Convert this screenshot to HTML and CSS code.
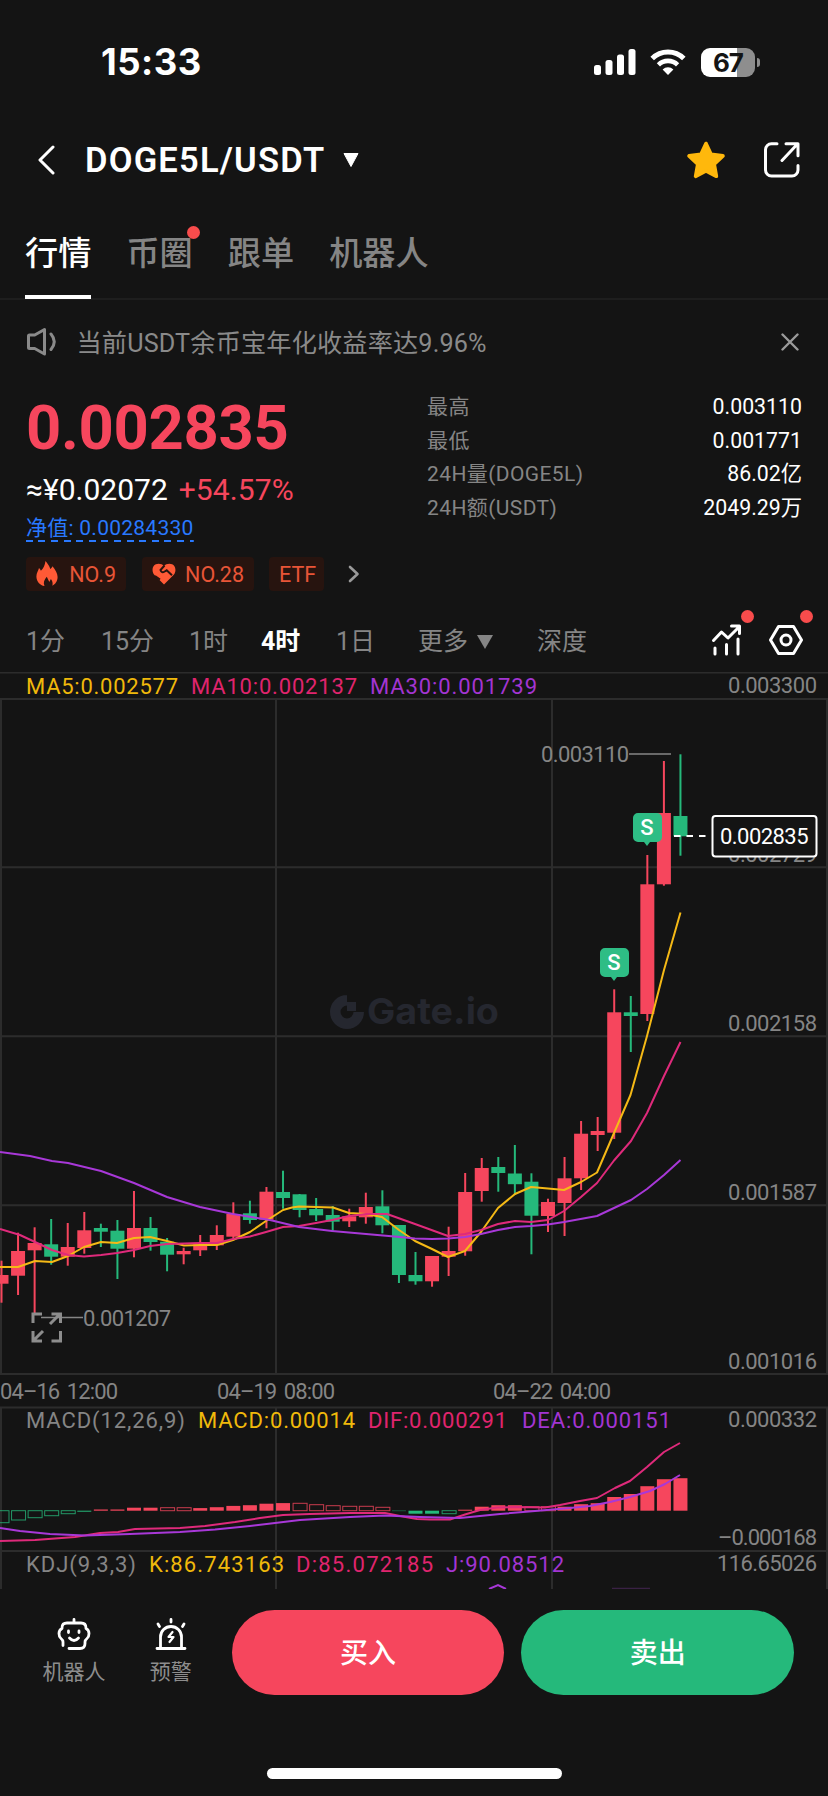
FILE: index.html
```html
<!DOCTYPE html>
<html lang="zh-Hans">
<head>
  <meta charset="UTF-8" />
  <meta name="viewport" content="width=device-width, initial-scale=1.0"/>
  <title>DOGE5L/USDT</title>
  <link rel="stylesheet" href="styles.css">
</head>
<body>

<div class="status-bar">
  <span class="time">15:33</span>
  <svg class="signal" width="42" height="26" viewBox="0 0 42 26" fill="#fff">
    <rect x="0" y="16" width="7" height="10" rx="2.5"/>
    <rect x="11.5" y="11" width="7" height="15" rx="2.5"/>
    <rect x="23" y="5.5" width="7" height="20.5" rx="2.5"/>
    <rect x="34.5" y="0" width="7" height="26" rx="2.5"/>
  </svg>
  <svg class="wifi" width="36" height="26" viewBox="0 0 36 26">
    <path d="M2.2 9.6a22.4 22.4 0 0 1 31.6 0" fill="none" stroke="#fff" stroke-width="5"/>
    <path d="M8.4 15.8a13.8 13.8 0 0 1 19.2 0" fill="none" stroke="#fff" stroke-width="4.6"/>
    <path d="M18 26l-5.4-5.6a7.8 7.8 0 0 1 10.8 0z" fill="#fff"/>
  </svg>
  <div class="battery"><span>67</span></div>
</div>

<header class="header">
  <svg class="back" width="18" height="30" viewBox="0 0 18 30"><path d="M15 2L2 15l13 13" fill="none" stroke="#fff" stroke-width="3" stroke-linecap="round" stroke-linejoin="round"/></svg>
  <h1>DOGE5L/USDT</h1>
  <svg class="caret" width="16" height="14" viewBox="0 0 16 14"><path d="M1 .5h14L8 13.5z" fill="#fff" stroke="#fff" stroke-linejoin="round"/></svg>
  <svg class="star" width="40" height="38" viewBox="0 0 40 38"><path d="M20 2.5l5 10.8 12 1.6-8.8 8.2 2.2 12.2L20 30 9.6 35.3l2.2-12.2L3 14.9l12-1.6z" fill="#ffb80c" stroke="#ffb80c" stroke-width="3.6" stroke-linejoin="round"/></svg>
  <svg class="share" width="36" height="36" viewBox="0 0 36 36" fill="none" stroke="#fff" stroke-width="3" stroke-linecap="round" stroke-linejoin="round">
    <path d="M13 1.7H7.5a6 6 0 0 0-6 6V28a6 6 0 0 0 6 6H28a6 6 0 0 0 6-6v-4.5"/>
    <path d="M22 1.7h12v12M33.5 2L18 18.5"/>
  </svg>
</header>

<nav class="tabs">
  <a class="tab active">行情</a>
  <a class="tab dot">币圈</a>
  <a class="tab">跟单</a>
  <a class="tab">机器人</a>
</nav>

<div class="notice">
  <svg width="32" height="30" viewBox="0 0 32 30" fill="none" stroke="#8a8a8a" stroke-width="3" stroke-linejoin="round">
    <path d="M2.5 9q0-1 1-1h5.2L18.500 2.500V27L8.700 21.500H3.500q-1 0-1-1z"/>
    <path d="M25 7q6.5 7.800 0 15.500" stroke-linecap="round"/>
  </svg>
  <span>当前USDT余币宝年化收益率达9.96%</span>
  <svg class="close" width="18" height="18" viewBox="0 0 18 18"><path d="M1.5 1.5l15 15M16.5 1.5l-15 15" stroke="#9a9a9a" stroke-width="2.4" stroke-linecap="round"/></svg>
</div>

<section class="summary">
  <div class="quote">
    <div class="price">0.002835</div>
    <div class="fiat"><span>≈¥0.02072</span><span class="change">+54.57%</span></div>
    <div class="nav-row"><span class="nav-value">净值: 0.00284330</span></div>
    <div class="badges">
      <span class="badge b1">
        <svg width="22" height="26" viewBox="0 0 22 26" fill="#ff5a36"><path d="M9.5 0c1.8 2.5 4 4.8 4.8 8 1-.6 1.800-1.600 2.200-2.800C19.500 9 21.600 12.500 21.600 16c0 4-2.300 7.300-5.200 8.700.6-2.600 0-4.700-1.500-6.700l-1.600 3-2.500-5.200c-2.600 3-3.800 6-2.300 9.200C4 24.500.4 20.500.4 15.500c0-3.500 1.900-5.500 2.600-8.500.8.9 1.500 1.700 1.900 2.700C7.700 7.300 8.800 4.200 9.500 0z"/></svg>
        NO.9
      </span>
      <span class="badge b2">
        <svg width="24" height="22" viewBox="0 0 24 22"><path d="M12 21.5L2 11.5C-1 7 .8.8 6.5.8c2.3 0 4.2.8 5.5 2.2C13.300 1.600 15.200.8 17.500.8 23.200.8 25 7 22 11.500z" fill="#ff5a36"/><path d="M12.5 2.500L8.500 7q1 3.500 4.200 1.500l2-1.200 5.300 5M3 13l5 3.500" fill="none" stroke="#27140f" stroke-width="2"/></svg>
        NO.28
      </span>
      <span class="badge b3">ETF</span>
      <svg class="more" width="12" height="18" viewBox="0 0 12 18"><path d="M2 2l7.500 7L2 16" fill="none" stroke="#9a9a9a" stroke-width="2.600" stroke-linecap="round" stroke-linejoin="round"/></svg>
    </div>
  </div>
  <dl class="stats">
    <dt>最高</dt><dd>0.003110</dd>
    <dt>最低</dt><dd>0.001771</dd>
    <dt>24H量(DOGE5L)</dt><dd>86.02亿</dd>
    <dt>24H额(USDT)</dt><dd>2049.29万</dd>
  </dl>
</section>

<div class="periods">
  <span class="p1">1分</span>
  <span class="p2">15分</span>
  <span class="p3">1时</span>
  <span class="p4 active">4时</span>
  <span class="p5">1日</span>
  <span class="p6">更多<i></i></span>
  <span class="p7">深度</span>
  <div class="tool dot t1">
    <svg width="32" height="32" viewBox="0 0 32 32" fill="none" stroke="#fff" stroke-width="3" stroke-linecap="round" stroke-linejoin="round"><path d="M2.5 16.5L10.5 8l6.5 6L28 3M20.5 2h8v7.5"/><path d="M4 24v6M15.5 20.5V30M27 15v15"/></svg>
  </div>
  <div class="tool dot t2">
    <svg width="34" height="30" viewBox="0 0 34 30" fill="none" stroke="#fff" stroke-width="3" stroke-linejoin="round"><path d="M9.5 1.500h15L32.500 15l-8 13.500h-15L1.500 15z"/><circle cx="17" cy="15" r="5"/></svg>
  </div>
</div>

<svg id="chart" width="828" height="917" viewBox="0 672 828 917">
  <g class="grid">
    <path d="M0 672.5H828" stroke-width="1.5"/>
    <path d="M0 699H828M0 867.3H828M0 1036.3H828M0 1205.3H828M0 1374H828M0 1407.5H828M0 1551H828"/>
    <path d="M1 699V1374M276 699V1374M552 699V1374M827 699V1374M1 1407V1589M276 1407V1589M552 1407V1589M827 1407V1589"/>
  </g>

  <g class="watermark">
    <path d="M347 994.500v11a6.500 6.500 0 1 0 6.500 6.500h10.500a17 17 0 1 1-17-17z"/>
    <rect x="347" y="1002" width="9" height="9"/>
    <text x="367" y="1024" textLength="132" lengthAdjust="spacingAndGlyphs">Gate.io</text>
  </g>

  <g id="candles"></g>
  <g id="macd"></g>
  <g id="lines"></g>

  <path d="M489 1589l9-4 8 4" fill="none" stroke="#a838d8" stroke-width="2"/>
  <path d="M612 1588.5h38" stroke="#3a2144" stroke-width="1.5"/>

  <g class="labels">
    <text class="ma1" x="26" y="694" textLength="152">MA5:0.002577</text>
    <text class="ma2" x="191" y="694" textLength="166">MA10:0.002137</text>
    <text class="ma3" x="370" y="694" textLength="167">MA30:0.001739</text>
    <text x="728" y="693" textLength="89">0.003300</text>
    <text x="728" y="862" textLength="89">0.002729</text>
    <text x="728" y="1031" textLength="89">0.002158</text>
    <text x="728" y="1200" textLength="89">0.001587</text>
    <text x="728" y="1369" textLength="89">0.001016</text>
    <text class="date" x="0" y="1398.5" textLength="118">04–16 12:00</text>
    <text class="date" x="217" y="1398.5" textLength="118">04–19 08:00</text>
    <text class="date" x="493" y="1398.5" textLength="118">04–22 04:00</text>
    <text x="26" y="1428" textLength="159">MACD(12,26,9)</text>
    <text class="ma1" x="198" y="1428" textLength="157">MACD:0.00014</text>
    <text class="ma2" x="368" y="1428" textLength="139">DIF:0.000291</text>
    <text class="ma3" x="522" y="1428" textLength="149">DEA:0.000151</text>
    <text x="728" y="1427" textLength="89">0.000332</text>
    <text x="718" y="1545" textLength="99">–0.000168</text>
    <text x="26" y="1571.5" textLength="110">KDJ(9,3,3)</text>
    <text class="ma1" x="149" y="1571.5" textLength="135">K:86.743163</text>
    <text class="ma2" x="296" y="1571.5" textLength="137">D:85.072185</text>
    <text class="ma3" x="446" y="1571.5" textLength="118">J:90.08512</text>
    <text x="717" y="1571" textLength="100">116.65026</text>
    <text x="541" y="762" textLength="88">0.003110</text>
    <text x="83" y="1325.5" textLength="88">0.001207</text>
  </g>
  <path d="M629 754H671M41 1317.5H83" stroke="#858585" stroke-width="1.5"/>

  <!-- fullscreen handle -->
  <path d="M33 1323v-9h9M51.5 1314h9v9M50 1324l9.500-9.500M60.500 1331v10h-9M33 1331v10h9M34 1340l9-9" fill="none" stroke="#8d8d8d" stroke-width="3"/>

  <!-- sell markers -->
  <g class="marker"><path d="M638 813h19a5 5 0 0 1 5 5v19a5 5 0 0 1-5 5h-7l-3 4-3-4h-6a5 5 0 0 1-5-5v-19a5 5 0 0 1 5-5z"/><text x="647" y="835">S</text></g>
  <g class="marker"><path d="M605 948h19a5 5 0 0 1 5 5v19a5 5 0 0 1-5 5h-7l-3 4-3-4h-6a5 5 0 0 1-5-5v-19a5 5 0 0 1 5-5z"/><text x="614" y="970">S</text></g>

  <path d="M674 836H706" stroke="#fff" stroke-width="2" stroke-dasharray="6.5 6"/>
  <rect x="712.5" y="816" width="104" height="40.5" rx="3" fill="#141414" stroke="#fff" stroke-width="2"/>
  <text class="last" x="720" y="843.5" textLength="88.5">0.002835</text>
</svg>

<footer class="bottom-bar">
  <a class="item robot">
    <svg width="34" height="32" viewBox="0 0 34 32" fill="none" stroke="#fff" stroke-width="2.8" stroke-linecap="round" stroke-linejoin="round">
      <path d="M17 1.5V5M6 27.500V24q0-2-2-3.500Q2 19 2 15.500t3-5V10q0-5 5-5h14q5 0 5 5v.5q3 1.500 3 5t-2 5q-2 1.500-2 3.500v1.500q0 5-5 5H12"/>
      <path d="M11.5 13v1.5M22 13v1.5M12.5 20q4.5 5 9 0"/>
    </svg>
    <span>机器人</span>
  </a>
  <a class="item alert">
    <svg width="32" height="32" viewBox="0 0 32 32" fill="none" stroke="#fff" stroke-width="2.8" stroke-linecap="round" stroke-linejoin="round">
      <path d="M16 1.5V4M3 6l1.5 2.5M29 6l-1.5 2.5M2 30.5h28M5.5 30V19a10.5 10.5 0 0 1 21 0v11"/>
      <path d="M17.500 14l-4 5h5l-4 5" stroke-width="2.200"/>
    </svg>
    <span>预警</span>
  </a>
  <button class="buy">买入</button>
  <button class="sell">卖出</button>
</footer>
<div class="home-indicator"></div>

<script src="chart.js"></script>
</body>
</html>
```
FILE: styles.css
```css
* {
  box-sizing: border-box;
}

body {
  margin: 0;
  width: 828px;
  height: 1796px;
  overflow: hidden;
  background: #141414;
  color: #fff;
  font-family: Roboto, "Noto Sans CJK SC", sans-serif;
}

svg {
  display: block;
  flex: none;
}

.status-bar {
  height: 124px;
  padding: 0 73px 0 101px;
  display: flex;
  align-items: center;
}

.time {
  font-family: Inter, sans-serif;
  font-weight: 700;
  font-size: 36.5px;
  letter-spacing: 0.5px;
  margin-right: auto;
}

.wifi {
  margin: 0 15px 0 14px;
}

.battery {
  position: relative;
  width: 54px;
  height: 29px;
  border-radius: 9px;
  background: linear-gradient(90deg, #fff 66%, #8e8e8e 66%);
  color: #141414;
  font: 700 26px/29px Inter, sans-serif;
  letter-spacing: -1px;
  text-align: center;
}

.battery::after {
  content: "";
  position: absolute;
  right: -5px;
  top: 10px;
  width: 3px;
  height: 9px;
  border-radius: 0 3px 3px 0;
  background: #8e8e8e;
}

.header {
  height: 72px;
  padding: 0 28px 0 38px;
  display: flex;
  align-items: center;
}

.header h1 {
  margin: 0 18px 0 29px;
  font-size: 34.5px;
  font-weight: 600;
  letter-spacing: 1.2px;
}

.star {
  margin: 0 38px 0 auto;
}

.tabs {
  height: 104px;
  padding: 0 25px;
  display: flex;
  gap: 35px;
  border-bottom: 2px solid #1e1e1e;
}

.tab {
  position: relative;
  height: 103px;
  font-size: 33.2px;
  font-weight: 500;
  line-height: 115px;
  color: #858585;
}

.tab.active {
  color: #fff;
  border-bottom: 4px solid #fff;
}

.dot::after {
  content: "";
  position: absolute;
  width: 13px;
  height: 13px;
  border-radius: 50%;
  background: #f84c4c;
}

.tab.dot::after {
  top: 30px;
  right: -7px;
}

.notice {
  height: 82px;
  padding: 1px 29px 0 26px;
  display: flex;
  align-items: center;
  font-size: 25.2px;
  letter-spacing: 0.15px;
  color: #8a8a8a;
}

.notice span {
  margin: -2px auto 0 18.5px;
}

.summary {
  height: 226px;
  padding: 2px 26px 0;
  display: flex;
  justify-content: space-between;
}

.price {
  height: 82px;
  margin-top: 3px;
  font-size: 61.5px;
  font-weight: 700;
  line-height: 82px;
  letter-spacing: -0.3px;
  color: #f6465d;
}

.fiat {
  height: 42px;
  font-size: 30px;
  line-height: 42px;
}

.change {
  margin-left: 11px;
  letter-spacing: 0.1px;
  color: #f6465d;
}

.nav-row {
  height: 36px;
  font-size: 21px;
  line-height: 34px;
  color: #2979ff;
}

.nav-value {
  display: inline-block;
  height: 31px;
  letter-spacing: 0.25px;
  background: repeating-linear-gradient(90deg, #2979ff 0 7px, transparent 7px 12.6px) bottom / 100% 2px no-repeat;
}

.badges {
  display: flex;
  align-items: center;
  margin-top: 10px;
}

.badge {
  height: 34px;
  padding: 0 10px;
  display: flex;
  align-items: center;
  justify-content: space-between;
  border-radius: 4px;
  background: #27140f;
  color: #e85537;
  font-size: 21.5px;
}

.b1 {
  width: 100px;
}

.b2 {
  width: 112px;
  margin: 0 15px 0 16px;
}

.b3 {
  width: 55px;
}

.more {
  margin-left: 24px;
}

.stats {
  width: 375px;
  height: 136px;
  margin: 6px 0 0;
  display: grid;
  grid-template-columns: auto auto;
  grid-auto-rows: 33.7px;
  line-height: 34px;
  font-size: 21px;
}

.stats dt {
  letter-spacing: 0.4px;
  color: #858585;
}

.stats dd {
  margin: 0;
  text-align: right;
  font-size: 21.3px;
}

.periods {
  height: 64px;
  padding-left: 26px;
  display: grid;
  grid-template-columns: 75px 88px 72px 75px 82px 119px 174px 58px 59px;
  align-items: center;
  font-size: 25px;
  color: #858585;
}

.periods span {
  margin-top: -3px;
}

.periods .active {
  color: #fff;
  font-weight: 700;
}

.periods i {
  display: inline-block;
  margin-left: 9px;
  border: solid transparent;
  border-width: 14px 8px 0;
  border-top-color: #858585;
  vertical-align: 1px;
}

.tool {
  position: relative;
}

.tool.dot::after {
  top: -14px;
  left: 30px;
}

.t2.dot::after {
  top: -15px;
  left: 31px;
}

#chart text {
  font-size: 22px;
  fill: #858585;
}

#chart .date {
  word-spacing: 3px;
}

.grid path {
  stroke: #2c2c2c;
  stroke-width: 2;
}

#chart .watermark text {
  font: 700 36px Inter, sans-serif;
  fill: #25272f;
}

.watermark path,
.watermark rect {
  fill: #25272f;
}

#chart .ma1 {
  fill: #f0b90b;
}

#chart .ma2 {
  fill: #e0246e;
}

#chart .ma3 {
  fill: #a335d2;
}

.marker path {
  fill: #2ebd85;
}

#chart .marker text {
  fill: #fff;
  font-weight: 500;
  text-anchor: middle;
}

#chart .last {
  fill: #fff;
}

#lines polyline {
  fill: none;
  stroke-width: 2;
  stroke-linejoin: round;
}

.bottom-bar {
  height: 128px;
  padding: 0 34px 2px 33px;
  display: flex;
  align-items: center;
}

.item {
  display: flex;
  flex-direction: column;
  align-items: center;
  gap: 7px;
  padding-top: 1px;
  font-size: 21px;
  line-height: 30px;
  color: #8d8d8d;
}

.robot {
  width: 82px;
}

.alert {
  width: 112px;
}

.bottom-bar button {
  width: 273px;
  height: 85px;
  padding: 0 0 3px;
  border: 0;
  border-radius: 43px;
  color: #fff;
  font: 500 28px "Noto Sans CJK SC", sans-serif;
}

.buy {
  margin: 0 17px 0 5px;
  background: #f6465d;
}

.sell {
  background: #25b97b;
}

.home-indicator {
  width: 295px;
  height: 11px;
  margin: 51px auto 0;
  border-radius: 6px;
  background: #fff;
}
```
FILE: chart.js
```js
const NS = "http://www.w3.org/2000/svg";
const RED = "#f6465d";
const GREEN = "#25b97b";
const STEP = 16.56;
const ZERO = 1510.7;

// [color, high, bodyTop, bodyBottom, low]
const candles = [
  ["r", 1260.7, 1275, 1283.7, 1302.7],
  ["r", 1232.7, 1251, 1275.7, 1295],
  ["r", 1227.3, 1243, 1250.3, 1313],
  ["g", 1219, 1244.3, 1256.7, 1264.7],
  ["r", 1223, 1247, 1256.7, 1265.7],
  ["r", 1212, 1230.3, 1248, 1253.7],
  ["g", 1223.7, 1228, 1231.7, 1247],
  ["g", 1220, 1230.7, 1248.7, 1279],
  ["r", 1191, 1228, 1248.7, 1257.3],
  ["g", 1217, 1228, 1242, 1250.7],
  ["g", 1238, 1241.7, 1254.7, 1271.3],
  ["r", 1247.7, 1251, 1254.3, 1264.3],
  ["r", 1235, 1244.3, 1250.3, 1256],
  ["r", 1225.3, 1235, 1245.3, 1250],
  ["r", 1202.3, 1214, 1236.7, 1238],
  ["g", 1200.7, 1213.3, 1220, 1223.7],
  ["r", 1187, 1191.7, 1219.7, 1228.3],
  ["g", 1170.7, 1192, 1198, 1208.7],
  ["g", 1194, 1194.3, 1210, 1217.3],
  ["g", 1198, 1209, 1215.3, 1221],
  ["g", 1206, 1215, 1221.7, 1231.7],
  ["r", 1208.7, 1216.3, 1221.3, 1227],
  ["r", 1192.7, 1207, 1217.3, 1223.7],
  ["g", 1190.3, 1206.3, 1225.3, 1233.3],
  ["g", 1225, 1225, 1275, 1283],
  ["g", 1252, 1275, 1281.3, 1284.7],
  ["r", 1256, 1256, 1281.3, 1286.7],
  ["r", 1226.7, 1251, 1256.7, 1276],
  ["r", 1173, 1192, 1251.3, 1255.7],
  ["r", 1158, 1168, 1191, 1201.7],
  ["g", 1157, 1167, 1173, 1191.7],
  ["g", 1145, 1173.5, 1184.2, 1195],
  ["g", 1173.3, 1181.7, 1215.7, 1254.3],
  ["r", 1198.7, 1202, 1216, 1232],
  ["r", 1157, 1178.3, 1203, 1236],
  ["r", 1121, 1133.7, 1178.3, 1190],
  ["r", 1117, 1131, 1135, 1151],
  ["r", 989.3, 1012.3, 1132.7, 1139],
  ["g", 996, 1012.3, 1016, 1052],
  ["r", 855, 884.3, 1014, 1021],
  ["r", 761, 813, 884.3, 885.7],
  ["g", 754.3, 816, 836.3, 855.7]
];

// [color, height, hollow]
const bars = [
  ["g", -12, 1], ["g", -9.3, 1], ["g", -7, 1], ["g", -5, 1], ["g", -3, 1], ["g", -1],
  ["r", 1.2], ["r", 1.2], ["r", 3], ["r", 3], ["r", 3, 1], ["r", 3, 1], ["r", 2.6], ["r", 3.5],
  ["r", 4.8], ["r", 5.5], ["r", 7], ["r", 7.6], ["r", 7.4, 1], ["r", 6, 1], ["r", 5, 1],
  ["r", 4.4, 1], ["r", 4.4, 1], ["r", 3.4, 1], ["g", -0.4], ["g", -3], ["g", -3], ["g", -3, 1],
  ["r", 1], ["r", 4], ["r", 5.5], ["r", 5.5], ["r", 4, 1], ["r", 4, 1], ["r", 4], ["r", 6.5],
  ["r", 7.5], ["r", 13.7], ["r", 16.7], ["r", 24.5], ["r", 31.5], ["r", 32.5]
];

const lines = [
  ["#f5b916", "0,1267 18,1267 35,1261 52,1262 68,1256 84,1247 101,1242 117,1243 134,1238 150,1237 167,1241 184,1245.5 200,1245 217,1245 233,1240 250,1232 266,1221 283,1210 292,1207.5 299,1206.5 316,1207 333,1207.5 349,1213 366,1214 382,1217 399,1230 415,1241 432,1249 448,1257 465,1251 481,1232 498,1208 515,1194 531,1187 548,1188.5 564,1190 581,1182 597,1172.5 614,1133 630.5,1095 647,1036 664,970 680.5,912.5"],
  ["#df2a7b", "0,1229 20,1235 35,1242 52,1250 68,1255 84,1256.5 101,1255 117,1253 134,1250 150,1246 167,1244 184,1243.5 200,1243 217,1243 233,1239 250,1236.5 266,1232 283,1227 299,1226 316,1223 332,1220 349,1216 366,1214 387,1214 415,1224 448,1236 465,1234 481,1230 498,1224 515,1221 531,1222 548,1220 564,1211 581,1197 597,1183 614,1160.5 631,1141 647,1113 664,1076 680.5,1042"],
  ["#a838d8", "0,1152 30,1156 52,1161 68,1163 101,1171 134,1183 167,1197 200,1207 233,1214 270,1220 299,1227 332,1231 366,1234 400,1237 415,1238.5 432,1239 448,1238.5 465,1237 481,1234 498,1230 515,1227 531,1226 548,1224.5 564,1222 597,1216 631,1200 647,1189 664,1175 680.5,1160"],
  ["#df2a7b", "0,1541 35,1540 75,1537 100,1533 118,1532 135,1529 180,1528 205,1526 235,1522 260,1518 283,1515 310,1514 350,1513 385,1513 400,1516 417,1519 430,1519.5 450,1519.5 465,1514.5 480,1510 497,1507.5 515,1507 545,1507.5 560,1505 580,1501 597,1498 615,1488 630,1481 647,1467 664,1452 680,1443"],
  ["#a838d8", "0,1528 20,1531 50,1534 85,1535.5 130,1534 180,1532 215,1529.5 250,1526 300,1520 350,1517 385,1515.5 420,1517 460,1518 500,1514 535,1511 570,1508 590,1506 610,1502 630,1497 650,1491 665,1484 680,1475"]
];

function add(parent, tag, attrs) {
  const el = document.createElementNS(NS, tag);
  for (const key in attrs) el.setAttribute(key, attrs[key]);
  parent.appendChild(el);
}

const candleGroup = document.getElementById("candles");
candles.forEach(([c, high, top, bottom, low], i) => {
  const x = 1.5 + i * STEP;
  const fill = c === "r" ? RED : GREEN;
  add(candleGroup, "rect", { x: x - 1, y: high, width: 2, height: low - high, fill });
  add(candleGroup, "rect", { x: x - 7, y: top, width: 14, height: bottom - top, fill });
});

const macdGroup = document.getElementById("macd");
bars.forEach(([c, h, hollow], i) => {
  const x = 1.5 + i * STEP;
  const color = c === "r" ? RED : GREEN;
  const y = h > 0 ? ZERO - h : ZERO;
  const height = Math.abs(h);
  if (hollow) {
    add(macdGroup, "rect", { x: x - 6.5, y: y, width: 14, height, fill: "none", stroke: color, "stroke-width": 1, opacity: 0.8 });
  } else {
    add(macdGroup, "rect", { x: x - 7, y, width: 14, height, fill: color });
  }
});

const lineGroup = document.getElementById("lines");
lines.forEach(([stroke, points]) => add(lineGroup, "polyline", { points, stroke }));
```
